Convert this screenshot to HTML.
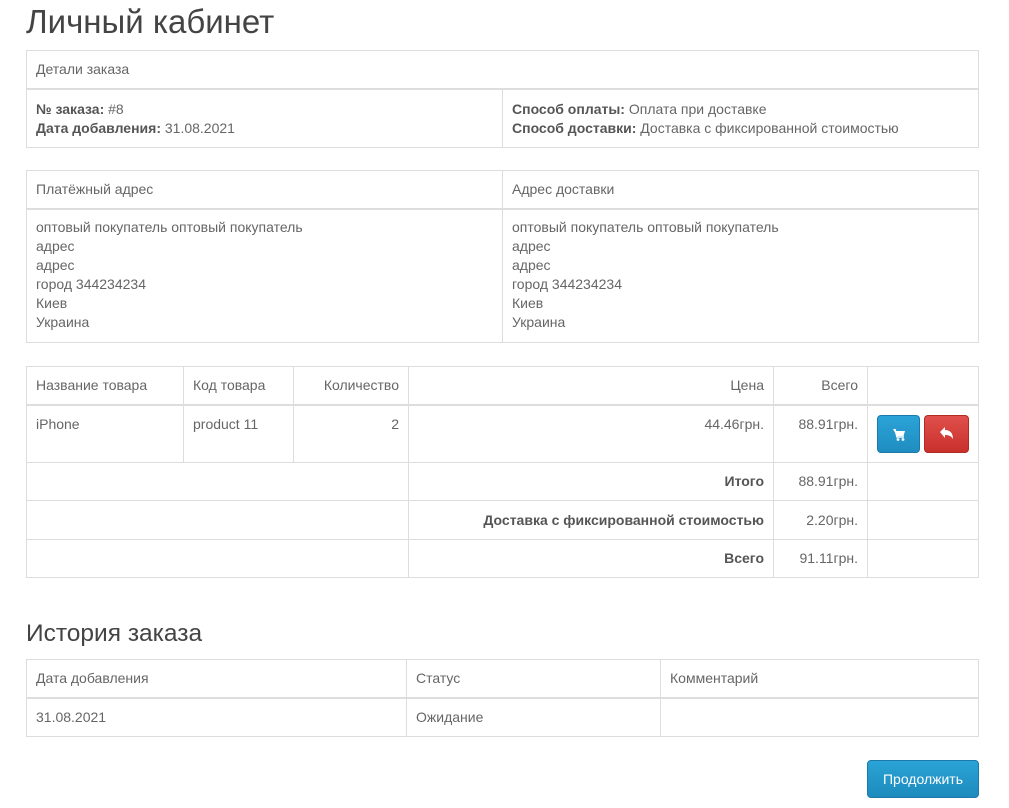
<!DOCTYPE html>
<html><head><meta charset="utf-8"><style>
body{margin:0;background:#fff;font-family:"Liberation Sans","DejaVu Sans",sans-serif;font-size:14px;color:#666;}
h1{position:absolute;left:26px;top:3px;margin:0;font-weight:normal;font-size:33px;color:#444;}
h2{position:absolute;left:26px;top:620px;margin:0;font-weight:normal;font-size:24.5px;color:#444;}
table{position:absolute;left:26px;width:953px;border-collapse:collapse;table-layout:fixed;}
td{border:1px solid #ddd;padding:0 9px;vertical-align:top;line-height:19px;white-space:nowrap;}
thead td{border-bottom:2px solid #ddd;vertical-align:middle;}
b{color:#555}
.r{text-align:right}
.btn{position:absolute;border-radius:4px;color:#fff;}
</style></head><body>
<h1>Личный кабинет</h1>
<table style="top:50px">
<thead><tr><td colspan="2" style="height:37px">Детали заказа</td></tr></thead>
<tbody><tr><td style="width:457px;height:57px;vertical-align:middle"><b>№ заказа:</b> #8<br><b>Дата добавления:</b> 31.08.2021</td>
<td style="vertical-align:middle"><b>Способ оплаты:</b> Оплата при доставке<br><b>Способ доставки:</b> Доставка с фиксированной стоимостью</td></tr></tbody>
</table>
<table style="top:170px">
<thead><tr><td style="width:457px;height:37px">Платёжный адрес</td><td>Адрес доставки</td></tr></thead>
<tbody><tr><td style="height:124px;padding-top:8px">оптовый покупатель оптовый покупатель<br>адрес<br>адрес<br>город 344234234<br>Киев<br>Украина</td>
<td style="padding-top:8px">оптовый покупатель оптовый покупатель<br>адрес<br>адрес<br>город 344234234<br>Киев<br>Украина</td></tr></tbody>
</table>
<table style="top:366px">
<thead><tr><td style="width:138px;height:37px">Название товара</td><td style="width:91px">Код товара</td><td class="r" style="width:96px">Количество</td><td class="r" style="width:346px">Цена</td><td class="r" style="width:75px">Всего</td><td></td></tr></thead>
<tbody>
<tr><td style="height:47px;padding-top:9px">iPhone</td><td style="padding-top:9px">product 11</td><td class="r" style="padding-top:9px">2</td><td class="r" style="padding-top:9px">44.46грн.</td><td class="r" style="padding-top:9px">88.91грн.</td><td></td></tr>
<tr><td colspan="3" style="height:37px"></td><td class="r" style="vertical-align:middle"><b>Итого</b></td><td class="r" style="vertical-align:middle">88.91грн.</td><td></td></tr>
<tr><td colspan="3" style="height:38px"></td><td class="r" style="vertical-align:middle"><b>Доставка с фиксированной стоимостью</b></td><td class="r" style="vertical-align:middle">2.20грн.</td><td></td></tr>
<tr><td colspan="3" style="height:37px"></td><td class="r" style="vertical-align:middle"><b>Всего</b></td><td class="r" style="vertical-align:middle">91.11грн.</td><td></td></tr>
</tbody></table>
<div class="btn" style="left:877px;top:415px;width:43px;height:38px;background:linear-gradient(#2ba3d8,#1f8dc0);border:1px solid #1b7aa8;box-sizing:border-box">
<svg width="43" height="38" viewBox="0 0 43 38" style="position:absolute;left:-1px;top:-1px"><path d="M16 14h2l1 2h9l-1.5 5H20z" fill="#fff"/><path d="M18 14l2 8h7" fill="none" stroke="#fff" stroke-width="1.5"/><circle cx="21" cy="24.5" r="1.4" fill="#fff"/><circle cx="26" cy="24.5" r="1.4" fill="#fff"/></svg></div>
<div class="btn" style="left:924px;top:415px;width:45px;height:38px;background:linear-gradient(#e0504c,#c9302c);border:1px solid #b02a26;box-sizing:border-box">
<svg width="45" height="38" viewBox="0 0 45 38" style="position:absolute;left:-1px;top:-1px"><path d="M16 17l5-5v3c5 0 8 3 8 9c-2-3-4-4-8-4v3z" fill="#fff"/></svg></div>
<h2>История заказа</h2>
<table style="top:659px">
<thead><tr><td style="width:361px;height:37px">Дата добавления</td><td style="width:235px">Статус</td><td>Комментарий</td></tr></thead>
<tbody><tr><td style="height:37px;vertical-align:middle">31.08.2021</td><td style="vertical-align:middle">Ожидание</td><td></td></tr></tbody>
</table>
<div class="btn" style="left:867px;top:760px;width:112px;height:38px;background:linear-gradient(#2aa3d6,#1d8bbd);border:1px solid #1b7aa8;box-sizing:border-box;text-align:center;line-height:36px;font-size:14px">Продолжить</div>
</body></html>
